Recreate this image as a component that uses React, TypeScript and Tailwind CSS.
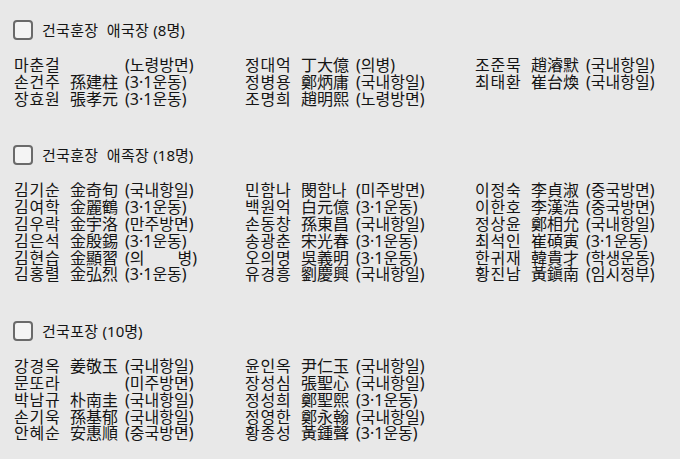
import React from "react";

type Person = [string, string, string];

interface Section {
  title: string;
  count: string;
  columns: Person[][];
}

const sections: Section[] = [
  {
    title: "건국훈장  애국장",
    count: "(8명)",
    columns: [
      [
        ["마춘걸", "", "(노령방면)"],
        ["손건주", "孫建柱", "(3·1운동)"],
        ["장효원", "張孝元", "(3·1운동)"],
      ],
      [
        ["정대억", "丁大億", "(의병)"],
        ["정병용", "鄭炳庸", "(국내항일)"],
        ["조명희", "趙明熙", "(노령방면)"],
      ],
      [
        ["조준묵", "趙濬默", "(국내항일)"],
        ["최태환", "崔台煥", "(국내항일)"],
      ],
    ],
  },
  {
    title: "건국훈장  애족장",
    count: "(18명)",
    columns: [
      [
        ["김기순", "金奇旬", "(국내항일)"],
        ["김여학", "金麗鶴", "(3·1운동)"],
        ["김우락", "金宇洛", "(만주방면)"],
        ["김은석", "金殷錫", "(3·1운동)"],
        ["김현습", "金顯習", "SPACED"],
        ["김홍렬", "金弘烈", "(3·1운동)"],
      ],
      [
        ["민함나", "閔함나", "(미주방면)"],
        ["백원억", "白元億", "(3·1운동)"],
        ["손동창", "孫東昌", "(국내항일)"],
        ["송광춘", "宋光春", "(3·1운동)"],
        ["오의명", "吳義明", "(3·1운동)"],
        ["유경흥", "劉慶興", "(국내항일)"],
      ],
      [
        ["이정숙", "李貞淑", "(중국방면)"],
        ["이한호", "李漢浩", "(중국방면)"],
        ["정상윤", "鄭相允", "(국내항일)"],
        ["최석인", "崔碩寅", "(3·1운동)"],
        ["한귀재", "韓貴才", "(학생운동)"],
        ["황진남", "黃鎭南", "(임시정부)"],
      ],
    ],
  },
  {
    title: "건국포장",
    count: "(10명)",
    columns: [
      [
        ["강경옥", "姜敬玉", "(국내항일)"],
        ["문또라", "", "(미주방면)"],
        ["박남규", "朴南圭", "(국내항일)"],
        ["손기욱", "孫基郁", "(국내항일)"],
        ["안혜순", "安惠順", "(중국방면)"],
      ],
      [
        ["윤인옥", "尹仁玉", "(국내항일)"],
        ["장성심", "張聖心", "(국내항일)"],
        ["정성희", "鄭聖熙", "(3·1운동)"],
        ["정영한", "鄭永翰", "(국내항일)"],
        ["황종성", "黃鍾聲", "(3·1운동)"],
      ],
      [],
    ],
  },
];

const Row = ({ p }: { p: Person }) => (
  <div className="grid h-[16.8px] grid-cols-[56px_55px_auto] items-center whitespace-nowrap">
    <span className="tracking-[0.8px]">{p[0]}</span>
    <span>{p[1]}</span>
    {p[2] === "SPACED" ? (
      <span className="flex w-[72px] justify-between">
        <span>(의</span>
        <span>병)</span>
      </span>
    ) : (
      <span>{p[2]}</span>
    )}
  </div>
);

export default function App() {
  return (
    <div
      className="min-h-[459px] w-[680px] bg-[#e8e8e8] pl-[13px] pt-[20px] text-[16px] leading-[16.8px] text-[#141414]"
      style={{ fontFamily: '"Noto Sans", "Noto Sans CJK KR", sans-serif' }}
    >
      {sections.map((s, i) => (
        <div key={i} className="mb-[38px]">
          {/* header */}
          <div className="flex h-5 items-center gap-[9px]">
            <div className="h-5 w-5 rounded-[4px] border-2 border-[#6a6a6a] bg-[#f4f4f4]" />
            <span className="whitespace-pre text-[15px] tracking-[0.3px]">
              {s.title} <span className="tracking-normal">{s.count}</span>
            </span>
          </div>
          {/* names */}
          <div className="mt-[17px] grid grid-cols-[231px_230px_auto] pl-[1px]">
            {s.columns.map((col, j) => (
              <div key={j}>
                {col.map((p, k) => (
                  <Row key={k} p={p} />
                ))}
              </div>
            ))}
          </div>
        </div>
      ))}
    </div>
  );
}
